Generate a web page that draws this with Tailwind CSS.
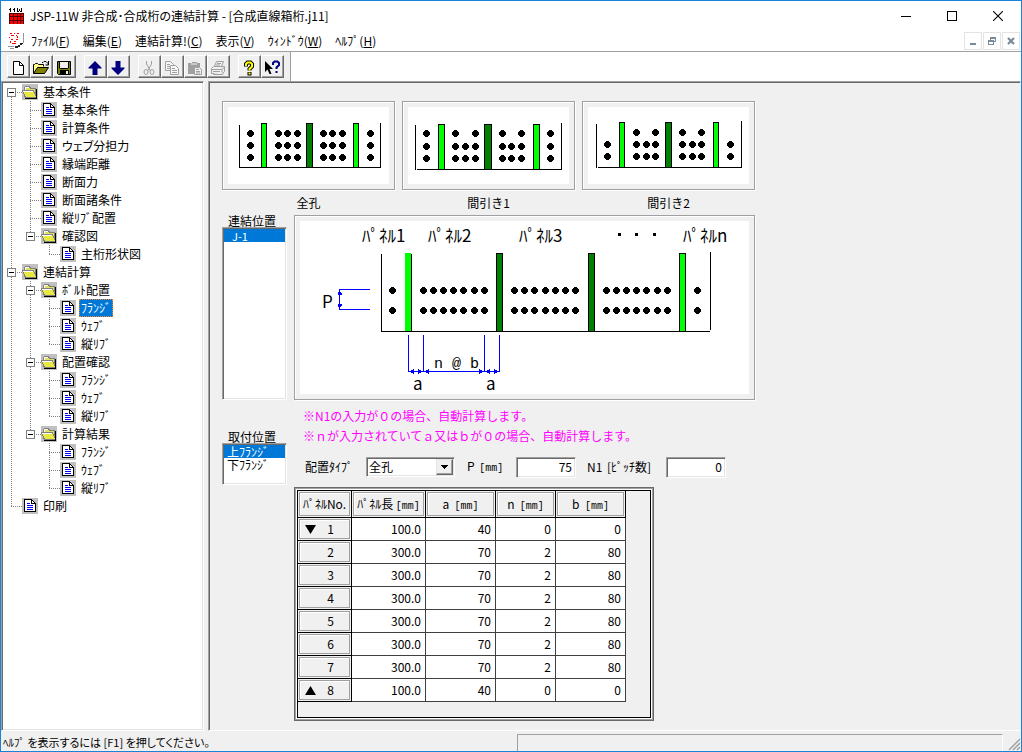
<!DOCTYPE html>
<html lang="ja">
<head>
  <meta charset="UTF-8">
  <meta name="viewport" content="width=device-width, initial-scale=1.0">
  <title>JSP-11W</title>
  <script src="https://cdn.jsdelivr.net/npm/@tailwindcss/browser@4"></script>
</head>
<body class="h-screen overflow-hidden flex flex-col border border-[#1883d7] bg-[#f0f0f0] text-black text-[12px] leading-[18px] font-['Noto_Sans_CJK_JP',sans-serif]">

<!-- title bar -->
<header class="h-[30px] shrink-0 bg-white flex items-center pl-[7px]">
  <svg class="w-[17px] h-4 mr-[5px]" viewBox="0 0 17 16" shape-rendering="crispEdges">
    <path d="M2 0h1v4h-1zM1 1h1v1h-1zM6 0h1v4h-1zM5 1h1v1h-1zM9 0h1v4h-1zM11 1h1v2h-1zM13 0h1v4h-1zM10 3h1v1h-1zM12 3h1v1h-1z" fill="#000"/>
    <rect x="1" y="5" width="15" height="11" fill="#f00"/>
    <path d="M1 5.500h15M1 8.500h15M1 12.500h15M1.500 5v11M5.500 5v11M9.500 5v11M12.500 5v11M15.500 5v11" stroke="#500" fill="none"/>
  </svg>
  <h1 class="flex-1 [font-feature-settings:'palt']">JSP-11W 非合成･合成桁の連結計算 - [合成直線箱桁.j11]</h1>
  <button aria-label="最小化" class="w-[46px] h-full flex items-center justify-center">
    <svg class="w-2.5 h-2.5" viewBox="0 0 10 10"><path d="M0 5.500h10" stroke="#000"/></svg>
  </button>
  <button aria-label="最大化" class="w-[46px] h-full flex items-center justify-center">
    <svg class="w-2.5 h-2.5" viewBox="0 0 10 10"><rect x=".5" y=".5" width="9" height="9" fill="none" stroke="#000"/></svg>
  </button>
  <button aria-label="閉じる" class="w-[46px] h-full flex items-center justify-center">
    <svg class="w-2.5 h-2.5" viewBox="0 0 10 10"><path d="M0 0l10 10M10 0L0 10" stroke="#000" stroke-width="1.100"/></svg>
  </button>
</header>

<!-- menu bar -->
<nav class="h-[21px] shrink-0 bg-white border-b border-[#a0a0a0] flex items-center pl-[7px]">
  <svg class="w-4 h-4 mr-[7px]" viewBox="0 0 16 16" shape-rendering="crispEdges">
    <path d="M2 0h2v1h-2zM6 0h1v1h-1zM9 0h2v1h-2zM3 2h3v1h-3zM8 2h1v1h-1zM1 4h1v1h-1zM9 3h1v2h-1zM3 6h2v1h-2zM2 8h1v2h-1zM6 8h2v1h-2zM8 6h2v1h-2zM4 10h4v1h-4z" fill="#f00"/>
    <path d="M15.500 0v10M0 13.500h6M2 15.500h4" stroke="#999"/>
    <path d="M7 13h3v-1h2v-2h3v1h-1v1h-2v2h-2v1h-3z" fill="#222"/>
  </svg>
  <div class="flex-1 flex gap-[13px]">
    <a href="#">ﾌｧｲﾙ(<u>F</u>)</a>
    <a href="#">編集(<u>E</u>)</a>
    <a href="#">連結計算!(<u>C</u>)</a>
    <a href="#">表示(<u>V</u>)</a>
    <a href="#">ｳｨﾝﾄﾞｳ(<u>W</u>)</a>
    <a href="#">ﾍﾙﾌﾟ(<u>H</u>)</a>
  </div>
  <div class="flex gap-px mr-px">
    <button aria-label="最小化" class="w-[18px] h-[18px] border border-[#e3e3e3] flex items-center justify-center">
      <svg class="w-2.5 h-2.5" viewBox="0 0 10 10"><path d="M2 7h6v2h-6z" fill="#7a8a99"/></svg>
    </button>
    <button aria-label="元に戻す" class="w-[18px] h-[18px] border border-[#e3e3e3] flex items-center justify-center">
      <svg class="w-2.5 h-2.5" viewBox="0 0 10 10" shape-rendering="crispEdges"><path d="M3 1h6v5h-2v-1h1v-2h-4v1h-1zM1 4h6v5h-6zM2 6v2h4v-2z" fill="#7a8a99" fill-rule="evenodd"/></svg>
    </button>
    <button aria-label="閉じる" class="w-[18px] h-[18px] border border-[#e3e3e3] flex items-center justify-center">
      <svg class="w-2.5 h-2.5" viewBox="0 0 10 10"><path d="M2 2l6 6M8 2L2 8" stroke="#7a8a99" stroke-width="2.200"/></svg>
    </button>
  </div>
</nav>

<!-- toolbar -->
<div class="h-[29px] shrink-0 flex bg-white">
  <div id="toolbar" class="w-[290px] pl-1.5 flex items-center border-r border-[#a0a0a0] bg-[#f0f0f0]"></div>
</div>

<main class="flex-1 min-h-0 flex gap-1">
  <!-- tree -->
  <aside class="w-[203px] shrink-0 bg-white border border-t-[#a0a0a0] border-l-[#a0a0a0] border-r-white border-b-white shadow-[inset_1px_1px_0_#696969,inset_-1px_-1px_0_#e3e3e3] pt-px pl-px">
    <ul id="tree"></ul>
  </aside>

  <!-- form -->
  <section class="flex-1 border border-t-[#a0a0a0] border-l-[#a0a0a0] border-r-[#f0f0f0] border-b-white shadow-[inset_1px_1px_0_#696969] pt-[19px] pl-[13px]">
    <div id="patterns" class="flex gap-[7px]"></div>

    <div class="grid grid-cols-[65px_461px] gap-x-[7px]">
      <div>
        <label for="joint" class="block pl-1.5 h-3 leading-[12px]">連結位置</label>
        <select id="joint" size="12" class="block w-full h-[173px] overflow-hidden bg-white border border-t-[#a0a0a0] border-l-[#a0a0a0] border-r-white border-b-white shadow-[inset_1px_1px_0_#696969,inset_-1px_-1px_0_#e3e3e3] p-px outline-none">
          <option selected class="flex items-center h-[13px] min-h-0 py-0 pl-2 pr-0 text-[11px] leading-[12px] bg-linear-to-r from-[#0078d7] to-[#0078d7] text-white!">J-1</option>
        </select>
      </div>

      <div class="border border-[#a0a0a0] shadow-[1px_1px_0_#fff,inset_1px_1px_0_#fff] p-[5px] h-[185px]">
        <svg class="block bg-white w-full h-full" viewBox="300 221 449 173" shape-rendering="crispEdges">
          <g font-size="17" fill="#000">
            <text x="362" y="242">ﾊﾟﾈﾙ1</text>
            <text x="428" y="242">ﾊﾟﾈﾙ2</text>
            <text x="519" y="242">ﾊﾟﾈﾙ3</text>
            <text x="683" y="242">ﾊﾟﾈﾙn</text>
            <text x="322" y="308">P</text>
            <text x="413" y="390">a</text>
            <text x="486" y="390">a</text>
          </g>
          <text x="434" y="368" font-size="15" class="font-['Liberation_Mono',monospace] whitespace-pre">n @ b</text>
          <path d="M618 233h3v3h-3zM635 233h3v3h-3zM653 233h3v3h-3z"/>
          <path d="M381.500 254v77.500H710M710.500 252v78" fill="none" stroke="#000"/>
          <rect x="405" y="253" width="6" height="78" fill="#0f0"/>
          <path d="M411.500 254v77" stroke="#000"/>
          <g stroke="#000">
            <rect x="496.500" y="253.500" width="6" height="78" fill="#008000"/>
            <rect x="588.500" y="253.500" width="6" height="78" fill="#008000"/>
            <rect x="679.500" y="253.500" width="6" height="78" fill="#0f0"/>
          </g>
          <g id="bolts"></g>
          <g fill="none" stroke="#00f">
            <path d="M339 289.500h31M339 309.500h31M339.500 290v19"/>
            <path d="M408.500 335v37M423.500 335v37M484.500 335v37M499.500 335v37M408 371.500h92"/>
          </g>
          <path fill="#00f" d="M339.500 290l3 5h-5zM339.500 309l3-5h-5zM409 371.500l5-2.500v5zM423 371.500l-5-2.500v5zM424 371.500l5-2.500v5zM484 371.500l-5-2.500v5zM485 371.500l5-2.500v5zM499 371.500l-5-2.500v5z"/>
        </svg>
      </div>

      <div class="pt-[31px]">
        <label for="flange" class="block pl-1.5 h-3 leading-[12px]">取付位置</label>
        <select id="flange" size="3" class="block w-full h-[42px] overflow-hidden bg-white border border-t-[#a0a0a0] border-l-[#a0a0a0] border-r-white border-b-white shadow-[inset_1px_1px_0_#696969,inset_-1px_-1px_0_#e3e3e3] p-px outline-none">
          <option selected class="flex items-center h-[13px] min-h-0 py-0 pl-[3px] pr-0 leading-[12px] bg-linear-to-r from-[#0078d7] to-[#0078d7] text-white!">上ﾌﾗﾝｼﾞ</option>
          <option class="flex items-center h-[13px] min-h-0 py-0 pl-[3px] pr-0 leading-[12px]">下ﾌﾗﾝｼﾞ</option>
        </select>
      </div>

      <div>
        <div class="pt-1.5 pl-[9px] leading-[20px] text-[#ff00ff]">
          <p>※N1の入力が０の場合、自動計算します。</p>
          <p>※ｎが入力されていてａ又はｂが０の場合、自動計算します。</p>
        </div>

        <div class="flex items-center mt-[11px] pl-[11px] h-5">
          <label for="type" class="w-[61px]">配置ﾀｲﾌﾟ</label>
          <div class="relative w-[89px] h-5">
            <select id="type" class="appearance-none w-full h-full pl-[2px] leading-[16px] bg-white border border-t-[#a0a0a0] border-l-[#a0a0a0] border-r-white border-b-white shadow-[inset_1px_1px_0_#696969,inset_-1px_-1px_0_#e3e3e3] outline-none">
              <option>全孔</option>
              <option>間引き1</option>
              <option>間引き2</option>
            </select>
            <span class="absolute right-0.5 top-0.5 w-[17px] h-4 pointer-events-none bg-[#f0f0f0] border border-t-[#e3e3e3] border-l-[#e3e3e3] border-r-[#696969] border-b-[#696969] shadow-[inset_-1px_-1px_0_#a0a0a0] flex items-center justify-center">
              <svg class="w-[7px] h-1" viewBox="0 0 7 4" shape-rendering="crispEdges"><path d="M0 0h7v1h-1v1h-1v1h-1v1h-1v-1h-1v-1h-1v-1h-1z"/></svg>
            </span>
          </div>
          <label for="pitch" class="ml-3 w-[49px]">P <span class="ml-0.5 font-['Liberation_Mono',monospace] text-[10px]">[mm]</span></label>
          <input id="pitch" type="text" value="75" class="w-[60px] h-[21px] pr-[3px] pb-[2px] text-right bg-white border border-t-[#a0a0a0] border-l-[#a0a0a0] border-r-white border-b-white shadow-[inset_1px_1px_0_#696969,inset_-1px_-1px_0_#e3e3e3] outline-none">
          <label for="n1" class="ml-[11px] w-[79px]">N1 <span class="ml-0.5">[ﾋﾟｯﾁ数]</span></label>
          <input id="n1" type="text" value="0" class="w-[60px] h-[21px] pr-[3px] pb-[2px] text-right bg-white border border-t-[#a0a0a0] border-l-[#a0a0a0] border-r-white border-b-white shadow-[inset_1px_1px_0_#696969,inset_-1px_-1px_0_#e3e3e3] outline-none">
        </div>

        <!-- panel grid -->
        <div class="mt-2.5 w-[360px] border border-[#696969] p-px shadow-[inset_1px_1px_0_#a0a0a0,inset_-1px_-1px_0_#a0a0a0]">
          <div class="border border-white">
            <div class="border border-black pb-[15px]">
              <table class="border-separate border-spacing-0 table-fixed w-[328px] leading-[16px]">
                <colgroup>
                  <col class="w-[54px]"><col class="w-[74px]"><col class="w-[70px]"><col class="w-[60px]"><col class="w-[70px]">
                </colgroup>
                <thead><tr id="head"></tr></thead>
                <tbody id="rows"></tbody>
              </table>
            </div>
          </div>
        </div>
      </div>
    </div>
  </section>
</main>

<footer class="h-[19px] shrink-0 flex mt-px">
  <p class="flex-1 pl-0.5 text-[11px] leading-[20px] [font-feature-settings:'palt']">ﾍﾙﾌﾟ を表示するには [F1] を押してください。</p>
  <div class="w-[486px] mt-[2px] mr-1 border-t border-l border-r border-t-[#a0a0a0] border-l-[#a0a0a0] border-r-white"></div>
  <svg class="w-3.5 h-[19px]" viewBox="0 0 14 19"><path d="M2 18L13 7M6 18l7-7M10 18l3-3" stroke="#a0a0a0" stroke-width="1.500"/></svg>
</footer>

<script>
  // toolbar: null is a group gap
  const tools = [
    ['新規作成', '<path d="M3.500 1.500h6l4 4v9h-10z" fill="#fff" stroke="#000"/><path d="M9.500 1.500v4h4" fill="none" stroke="#000"/>'],
    ['開く', '<path d="M.5 13.500v-9h1l1-1h2l1 1h5v2" fill="#ff8" stroke="#000"/><path d="M.5 13.500l4-6h11l-4 6z" fill="#808000" stroke="#000"/><path d="M9 2.500h1l1-1h2l2 2v1M15.500 1v4h-3" fill="none" stroke="#000"/>'],
    ['保存', '<path d="M1.500 1.500h13v13h-12l-1-1z" fill="#808000" stroke="#000"/><path d="M4 2h8v6h-8z" fill="#f0f0f0"/><path d="M3.500 2v6l1 .5h7l1-.5v-6" fill="none" stroke="#000"/><path d="M4 10h9v4h-9z"/><path d="M10 11h2v3h-2z" fill="#f0f0f0"/>'],
    null,
    ['上へ', '<path d="M8 1l6.500 6.500v1h-4v6.500h-5v-6.500h-4v-1z" fill="#000080"/>'],
    ['下へ', '<path d="M8 15l6.500-6.500v-1h-4v-6.500h-5v6.500h-4v1z" fill="#000080"/>'],
    null,
    ['切り取り', '<g fill="none" stroke="#a0a0a0"><path d="M5.500 1v3l4 7M10.500 1v3l-4 7"/><ellipse cx="5" cy="12" rx="2" ry="2.500"/><ellipse cx="11" cy="12" rx="2" ry="2.500"/></g>'],
    ['コピー', '<g fill="#f8f8f8" stroke="#a0a0a0"><path d="M1.500 1.500h5l3 3v6h-8z"/><path d="M3 4.500h3M3 6.500h4M3 8.500h4"/><path d="M6.500 5.500h5l3 3v6h-8z"/><path d="M8 8.500h3M8 10.500h5M8 12.500h5"/></g>'],
    ['貼り付け', '<path d="M1 3h4v-1h5v1h3v11h-12z" fill="#a0a0a0"/><path d="M4 4h6" stroke="#f0f0f0"/><path d="M7.500 7.500h5l2 2v5h-7z" fill="#f0f0f0" stroke="#a0a0a0"/><path d="M9 9.500h3M9 11.500h4M9 13h4" stroke="#a0a0a0"/>'],
    ['印刷', '<g fill="#f0f0f0" stroke="#a0a0a0"><path d="M4.500 6.500l2-5h7l-2 5"/><path d="M7 3.500h4M6 5h4"/><path d="M1.500 8.500l2-2h11v5l-2 2h-11z"/><path d="M1 9.500h11v4M12 9l3-2M3 11.500h7"/><path d="M3.500 13.500v1h9l1-2"/></g>'],
    null,
    ['ヘルプ', '<path d="M5 6.500V4l1.500-1.500h3L11 4v2.500L8.500 9v1.500" fill="none" stroke="#000" stroke-width="4"/><path d="M6.500 12h4v3.500h-4z"/><path d="M5 6V4l1.500-1.500h3L11 4v2.500L8.500 9v1.500" fill="none" stroke="#ff0" stroke-width="2"/><path d="M7.500 12.500h2v2h-2z" fill="#ff0"/>'],
    ['状況依存ヘルプ', '<path d="M1 1v11l2.500-2.500L5.500 14h2L5.500 9H9z"/><path d="M9 5V3l1.500-1.500h3L15 3v2l-2.500 2.500V9" fill="none" stroke="#000080" stroke-width="2"/><path d="M11.500 11h2v2h-2z" fill="#000080"/>'],
  ];

  document.getElementById('toolbar').innerHTML = tools.map(t => t
    ? `<button aria-label="${t[0]}" class="w-[23px] h-[23px] shrink-0 pt-0.5 pl-0.5 border border-t-white border-l-white border-r-[#696969] border-b-[#696969] shadow-[inset_-1px_-1px_0_#a0a0a0]"><svg class="block w-4 h-4" viewBox="0 0 16 16">${t[1]}</svg></button>`
    : '<span class="w-2 shrink-0"></span>').join('');

  // tree guides: | line, + branch, L last branch, F first box, B box, E last box, _ blank
  const tree = [
    ['F', 'd', '基本条件'],
    ['|+', 'p', '基本条件'],
    ['|+', 'p', '計算条件'],
    ['|+', 'p', 'ウェブ分担力'],
    ['|+', 'p', '縁端距離'],
    ['|+', 'p', '断面力'],
    ['|+', 'p', '断面諸条件'],
    ['|+', 'p', '縦ﾘﾌﾞ配置'],
    ['|E', 'd', '確認図'],
    ['|_L', 'p', '主桁形状図'],
    ['B', 'd', '連結計算'],
    ['|B', 'd', 'ﾎﾞﾙﾄ配置'],
    ['||+', 'p', 'ﾌﾗﾝｼﾞ', true],
    ['||+', 'p', 'ｳｪﾌﾞ'],
    ['||L', 'p', '縦ﾘﾌﾞ'],
    ['|B', 'd', '配置確認'],
    ['||+', 'p', 'ﾌﾗﾝｼﾞ'],
    ['||+', 'p', 'ｳｪﾌﾞ'],
    ['||L', 'p', '縦ﾘﾌﾞ'],
    ['|E', 'd', '計算結果'],
    ['|_+', 'p', 'ﾌﾗﾝｼﾞ'],
    ['|_+', 'p', 'ｳｪﾌﾞ'],
    ['|_L', 'p', '縦ﾘﾌﾞ'],
    ['L', 'p', '印刷'],
  ];
  const up = 'M8.500 0v9', down = 'M8.500 10v8', across = 'M8 9.500h11';
  const box = '<rect x="4.500" y="5.500" width="8" height="8" fill="#fff" stroke="#808080"/><path d="M6 9.500h5" stroke="#000"/>';
  const guides = {
    '|': [up + down], '+': [up + down + across], 'L': [up + across], '_': [''],
    'F': [down + across, box], 'B': [up + down + across, box], 'E': [up + across, box],
  };
  const icons = {
    d: '<rect width="16" height="16" fill="#c0c0c0"/><path d="M2.500 12.500v-9l1-1h4l1 2h5v9" fill="#e0e060" stroke="#808080"/><path d="M3 3.500h4M3.500 4v2" stroke="#fff"/><path d="M.5 6.500h11l3 7h-11z" fill="#e8e840" stroke="#808080"/><path d="M1 7.500h10" stroke="#fff"/><path d="M14.500 5v9.500H3" fill="none" stroke="#000"/>',
    p: '<rect width="16" height="16" fill="#c0c0c0"/><path d="M2.500 1.500h7l4 4v8h-11z" fill="#fff" stroke="#000"/><path d="M9.500 1.500v4h4" fill="none" stroke="#000"/><path d="M5 5h3v1h-3zM5 7h6v1h-6zM5 9h6v1h-6zM5 11h6v1h-6z" fill="#00f"/>',
  };

  document.getElementById('tree').innerHTML = tree.map(([g, icon, text, selected]) => `
    <li class="flex items-center h-[18px]">
      ${[...g].map(c => `<svg class="w-[19px] h-[18px]" viewBox="0 0 19 18" shape-rendering="crispEdges"><path d="${guides[c][0]}" fill="none" stroke="#808080" stroke-dasharray="1 1"/>${guides[c][1] || ''}</svg>`).join('')}
      <svg class="w-4 h-4" viewBox="0 0 16 16" shape-rendering="crispEdges">${icons[icon]}</svg>
      <a href="#" class="${selected
        ? "ml-[3px] px-px leading-[16px] border border-dotted border-[#ff8728] bg-[#0078d7] text-white [font-feature-settings:'palt']"
        : "ml-[3px] px-0.5 [font-feature-settings:'palt']"}">${text}</a>
    </li>`).join('');

  // bolt head, 7px wide
  const dot = ([x, y]) => {
    const left = Math.floor(x) - 3, top = Math.floor(y) - 3;
    return `<path d="M${left + 2} ${top}h3v1h1v1h1v3h-1v1h-1v1h-3v-1h-1v-1h-1v-3h1v-1h1z"/>`;
  };
  const cross = (xs, ys) => xs.flatMap(x => ys.map(y => [x, y]));

  // bolt patterns: walls, stiffeners [x, width, colour], bolt groups
  const patterns = [
    { name: '全孔', box: '228 107 161 77', wall: 'M239.500 125v42.500H380.500V123', top: 123, base: 167,
      ribs: [[261, 5, '#0f0'], [306, 6, '#008000'], [353, 5, '#0f0']],
      dots: cross([250, 278, 287.5, 297, 323, 332.5, 342, 370], [133, 145, 157]) },
    { name: '間引き1', box: '408 107 161 77', wall: 'M415.500 125v45M417 169.500H561.500V123', top: 124, base: 169,
      ribs: [[438, 6, '#0f0'], [484, 7, '#008000'], [533, 6, '#0f0']],
      dots: cross([426.5, 455.5, 475, 502, 521.5, 550.5], [133.5, 146, 158]).concat(cross([465, 511.5], [146, 158])) },
    { name: '間引き2', box: '588 107 161 77', wall: 'M596.500 124v44M598 167.500H741.500V121', top: 122, base: 167,
      ribs: [[619, 5, '#0f0'], [665, 6, '#008000'], [713, 5, '#0f0']],
      dots: cross([607, 636, 646, 655, 682, 692, 701.5, 730.5], [144, 156.5]).concat(cross([636, 655, 682, 701.5], [132])) },
  ];

  document.getElementById('patterns').innerHTML = patterns.map(p => `
    <figure class="w-[173px]">
      <div class="h-[89px] p-[5px] border border-[#a0a0a0] shadow-[1px_1px_0_#fff,inset_1px_1px_0_#fff]">
        <svg class="block bg-white w-full h-full" viewBox="${p.box}" shape-rendering="crispEdges">
          <path d="${p.wall}" fill="none" stroke="#000"/>
          ${p.ribs.map(r => `<rect x="${r[0] + 0.5}" y="${p.top + 0.5}" width="${r[1]}" height="${p.base - p.top}" fill="${r[2]}" stroke="#000"/>`).join('')}
          ${p.dots.map(dot).join('')}
        </svg>
      </div>
      <figcaption class="text-center leading-[25px]">${p.name}</figcaption>
    </figure>`).join('');

  const boltX = [392.5, 697.5];
  for (const start of [423, 514.5, 606]) {
    for (let i = 0; i < 7; i++) boltX.push(start + i * 10.2);
  }
  document.getElementById('bolts').innerHTML = cross(boltX, [290.5, 310.5]).map(dot).join('');

  // panel table
  const unit = ` <span class="font-['Liberation_Mono',monospace] text-[10px]">[mm]</span>`;
  const heads = ['ﾊﾟﾈﾙNo.', 'ﾊﾟﾈﾙ長' + unit, 'a ' + unit, 'n ' + unit, 'b ' + unit];
  document.getElementById('head').innerHTML = heads.map(h => `
    <th class="h-[27px] p-px font-normal border-r border-b border-black"><div class="h-[24px] leading-[22px] border border-[#a0a0a0] shadow-[inset_1px_1px_0_#fff] whitespace-pre text-center">${h}</div></th>`).join('');

  const end = ['100.0', 40, 0, 0], mid = ['300.0', 70, 2, 80];
  const data = [end, mid, mid, mid, mid, mid, mid, end];
  document.getElementById('rows').innerHTML = data.map((r, i) => `
    <tr>
      <th class="h-[23px] p-px font-normal border-r border-b border-black"><div class="h-5 pl-[5px] pr-[15px] border border-[#a0a0a0] shadow-[inset_1px_1px_0_#fff] flex items-center justify-between">
        <svg class="w-[11px] h-[9px]" viewBox="0 0 11 9"><path d="${i === 0 ? 'M0 0h11L5.500 9z' : i === 7 ? 'M0 9h11L5.500 0z' : ''}"/></svg>${i + 1}</div></th>
      ${r.map(v => `<td class="p-0 pr-1 text-right bg-white border-r border-b border-[#404040]">${v}</td>`).join('')}
    </tr>`).join('');
</script>
</body>
</html>
